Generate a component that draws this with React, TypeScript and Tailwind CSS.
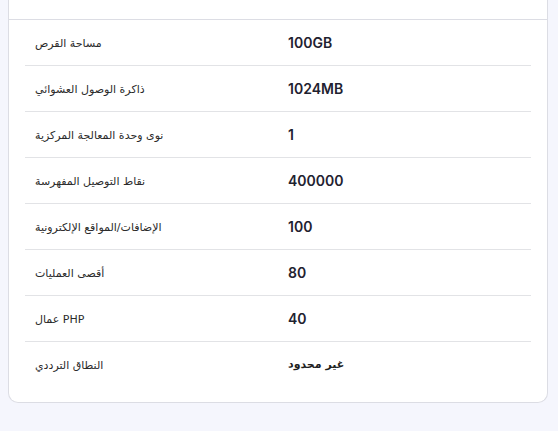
import React from "react";

const rows: { label: string; value: string; arabic?: boolean }[] = [
  { label: "مساحة القرص", value: "100GB" },
  { label: "ذاكرة الوصول العشوائي", value: "1024MB" },
  { label: "نوى وحدة المعالجة المركزية", value: "1" },
  { label: "نقاط التوصيل المفهرسة", value: "400000" },
  { label: "الإضافات/المواقع الإلكترونية", value: "100" },
  { label: "أقصى العمليات", value: "80" },
  { label: "عمال PHP", value: "40" },
  { label: "النطاق الترددي", value: "غير محدود", arabic: true },
];

export default function App() {
  return (
    <div className="min-h-[431px] w-[558px] bg-[#f5f6fd] pl-[8px]">
      <div className="w-[540px] rounded-b-[10px] border-x border-b border-[#dcdde4] bg-white px-[16px] pb-[14px]">
        <div className="-mx-[16px] h-[20px] border-b border-[#dcdde4]" />
        <div className="flex flex-col">
          {rows.map((r, i) => (
            <div
              key={i}
              className={`flex h-[46px] items-center ${i < rows.length - 1 ? "border-b border-[#e2e3e6]" : ""}`}
            >
              <div
                className="w-[253px] pl-[10px] pt-[3px] text-[11px] text-[#2b2b2b]"
                style={{ fontFamily: '"DejaVu Sans", "Noto Sans", sans-serif' }}
              >
                {r.label}
              </div>
              <div
                className={
                  r.arabic
                    ? "pl-[10px] pt-[1px] text-[11px] font-bold text-[#1f1f1f]"
                    : "pl-[10px] text-[14px] font-semibold text-[#1f2230]"
                }
                style={{
                  fontFamily: r.arabic
                    ? '"DejaVu Sans", "Noto Sans", sans-serif'
                    : 'Inter, "Noto Sans", sans-serif',
                }}
              >
                {r.value}
              </div>
            </div>
          ))}
        </div>
      </div>
    </div>
  );
}
